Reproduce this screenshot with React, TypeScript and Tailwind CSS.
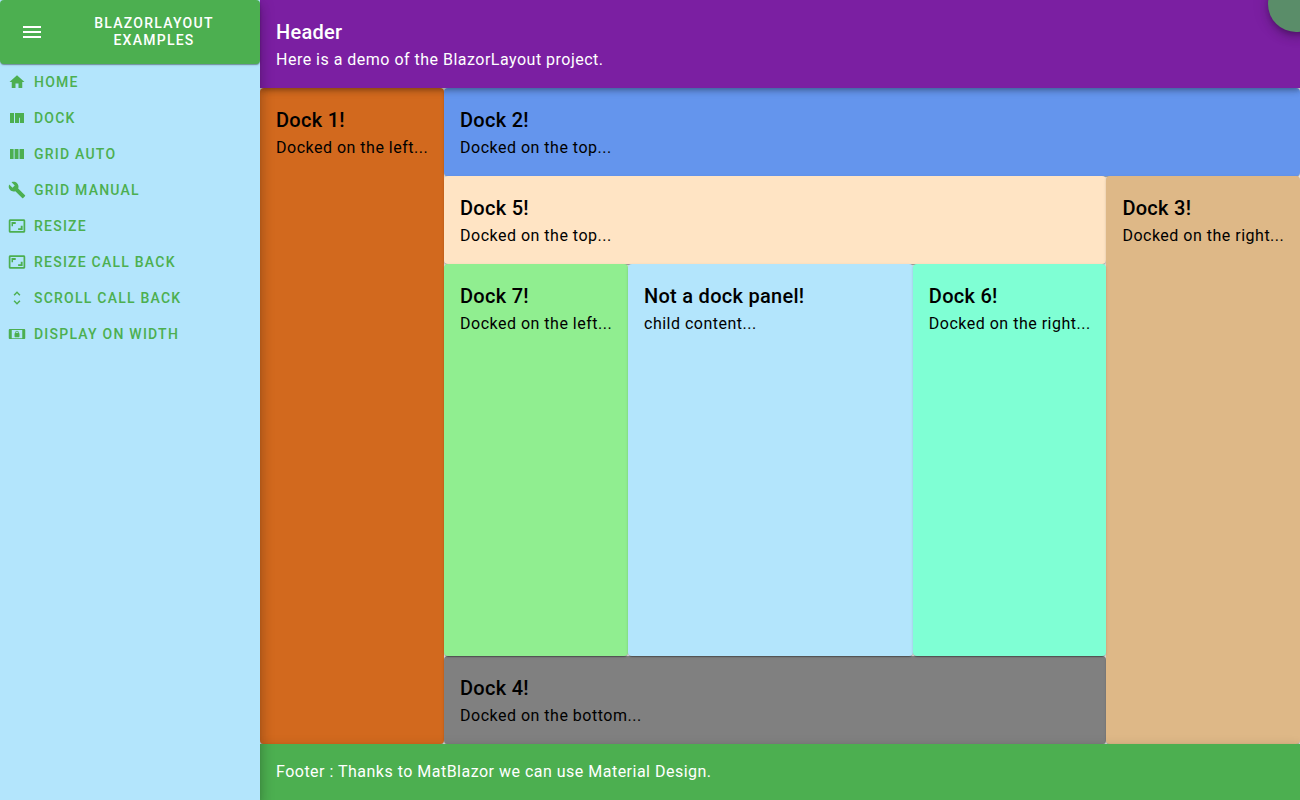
import type { ReactNode } from "react";

const z1 =
  "shadow-[0_2px_1px_-1px_rgba(0,0,0,0.2),0_1px_1px_0_rgba(0,0,0,0.14),0_1px_3px_0_rgba(0,0,0,0.12)]";

const aspectRatio =
  "M19.5 11.5h-2.5v3.5h-3.5v2.3h6zM6.7 9.3h3.6V6.7H4.7v5.6h2zM21 3H3c-1.1 0-2 .9-2 2v14c0 1.1.9 2 2 2h18c1.1 0 2-.9 2-2V5c0-1.1-.9-2-2-2zm-.3 15.7H3.3V5.3h17.4z";

const links = [
  { label: "Home", d: "M10 20v-6h4v6h5v-8h3L12 3 2 12h3v8z" },
  { label: "Dock", d: "M2.67 5.33H8v13.34H2.67zM9.33 5.33h12v13.34H16v-7h-1.2v7H9.33z" },
  { label: "Grid auto", d: "M2.67 5.33h4.8v13.34h-4.8zM8.8 5.33h5.2v13.34H8.8zM15.4 5.33h5.93v13.34H15.4z" },
  {
    label: "Grid manual",
    d: "M22.7 19l-9.1-9.1c.9-2.3.4-5-1.5-6.9-2-2-5-2.4-7.4-1.3L9 6 6 9 1.6 4.7C.4 7.1.9 10.1 2.9 12.1c1.9 1.9 4.6 2.4 6.9 1.5l9.1 9.1c.4.4 1 .4 1.4 0l2.3-2.3c.5-.4.5-1.1.1-1.4z",
  },
  { label: "Resize", d: aspectRatio },
  { label: "Resize call back", d: aspectRatio },
  {
    label: "Scroll call back",
    d: "M12 5.83L15.17 9l1.41-1.41L12 3 7.41 7.59 8.83 9 12 5.83zm0 12.34L8.83 15l-1.41 1.41L12 21l4.59-4.59L15.17 15 12 18.17z",
  },
  {
    label: "Display on width",
    d: "M21.5 5.3H2.5C1.7 5.3 1 6 1 6.8v10.4c0 .8.7 1.5 1.5 1.5h19c.8 0 1.5-.7 1.5-1.5V6.8c0-.8-.7-1.5-1.5-1.5zM19 17.5H5v-11h14zm-9-1.2h4c.7 0 1.3-.5 1.3-1.1v-3.4c0-.55-.45-1-1-1v-1c0-1.11-1.19-2.3-2.3-2.3s-2.3 1.19-2.3 2.3v1c-.55 0-1 .45-1 1v3.4c0 .6.6 1.1 1.3 1.1zm.9-6.5c0-.66.44-1.1 1.1-1.1s1.1.44 1.1 1.1v1h-2.2z",
  },
];

function Panel({ title, className, children }: { title: string; className: string; children: ReactNode }) {
  return (
    <section className={`rounded p-4 text-black ${z1} ${className}`}>
      <h6 className="text-[20px] leading-8 font-medium tracking-[0.28px]">{title}</h6>
      <p className="text-base leading-6 font-normal tracking-[0.5px] whitespace-nowrap">{children}</p>
    </section>
  );
}

export default function App() {
  return (
    <div className="flex h-[800px] w-[1300px] overflow-hidden bg-[#f0f0f0] font-['Roboto',sans-serif]">
      <aside className="relative z-20 w-[260px] shrink-0 bg-[#b3e5fc] shadow-[0_5px_5px_-3px_rgba(0,0,0,0.2),0_8px_10px_1px_rgba(0,0,0,0.14),0_3px_14px_2px_rgba(0,0,0,0.12)]">
        <div className={`flex h-16 items-center rounded bg-[#4caf50] text-white ${z1}`}>
          <button className="ml-2 flex size-12 items-center justify-center">
            <svg viewBox="0 0 24 24" className="size-6 fill-current">
              <path d="M3 18h18v-2H3v2zm0-5h18v-2H3v2zm0-7v2h18V6H3z" />
            </svg>
          </button>
          <div className="ml-[38px] w-[120px] text-center text-sm leading-[17px] font-medium tracking-[1.25px] uppercase">
            BlazorLayout Examples
          </div>
        </div>
        <nav>
          {links.map((l) => (
            <a key={l.label} className="flex h-9 items-center gap-2 px-2 text-[#4caf50]">
              <svg viewBox="0 0 24 24" className="size-[18px] fill-current">
                <path d={l.d} />
              </svg>
              <span className="text-sm font-medium tracking-[1.23px] uppercase">{l.label}</span>
            </a>
          ))}
        </nav>
      </aside>
      <div className="flex min-w-0 grow flex-col">
        <header className="relative z-10 h-[88px] shrink-0 bg-[#7b1fa2] p-4 text-white shadow-[0_2px_4px_-1px_rgba(0,0,0,0.2),0_4px_5px_0_rgba(0,0,0,0.14),0_1px_10px_0_rgba(0,0,0,0.12)]">
          <h6 className="text-[20px] leading-8 font-medium tracking-[0.28px]">Header</h6>
          <p className="text-base leading-6 font-normal tracking-[0.49px]">Here is a demo of the BlazorLayout project.</p>
          <div className="absolute -top-6 -right-6 size-14 rounded-full bg-[#5a8d69] shadow-[0_3px_5px_-1px_rgba(0,0,0,0.2),0_6px_10px_0_rgba(0,0,0,0.14),0_1px_18px_0_rgba(0,0,0,0.12)]" />
        </header>
        <main className="flex min-h-0 grow">
          <Panel title="Dock 1!" className="w-[184px] shrink-0 bg-[#d2691e]">Docked on the left...</Panel>
          <div className="flex grow flex-col">
            <Panel title="Dock 2!" className="h-[88px] shrink-0 bg-[#6495ed]">Docked on the top...</Panel>
            <div className="flex grow">
              <div className="flex grow flex-col">
                <Panel title="Dock 5!" className="h-[88px] shrink-0 bg-[#ffe4c4]">Docked on the top...</Panel>
                <div className="z-[1] flex grow">
                  <Panel title="Dock 7!" className="w-[184px] shrink-0 bg-[#90ee90]">Docked on the left...</Panel>
                  <Panel title="Not a dock panel!" className="grow bg-[#b3e5fc]">child content...</Panel>
                  <Panel title="Dock 6!" className="w-[193.6px] shrink-0 bg-[#7fffd4]">Docked on the right...</Panel>
                </div>
                <Panel title="Dock 4!" className="h-[88px] shrink-0 bg-[#808080]">Docked on the bottom...</Panel>
              </div>
              <Panel title="Dock 3!" className="w-[193.6px] shrink-0 bg-[#deb887]">Docked on the right...</Panel>
            </div>
          </div>
        </main>
        <footer className="relative z-10 flex h-14 shrink-0 items-center bg-[#4caf50] px-4 text-white shadow-[0_2px_4px_-1px_rgba(0,0,0,0.2),0_4px_5px_0_rgba(0,0,0,0.14),0_1px_10px_0_rgba(0,0,0,0.12)]">
          <p className="text-base leading-6 font-normal tracking-[0.49px]">Footer : Thanks to MatBlazor we can use Material Design.</p>
        </footer>
      </div>
    </div>
  );
}
